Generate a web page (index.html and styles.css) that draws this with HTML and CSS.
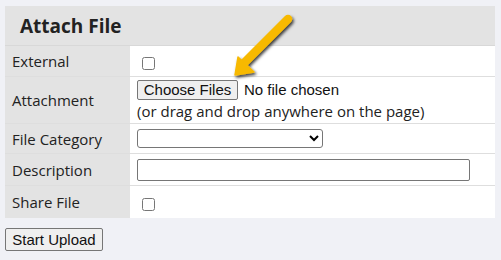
FILE: index.html
```html
<!DOCTYPE html>
<html>
<head>
<meta charset="utf-8">
<link rel="stylesheet" href="styles.css">
</head>
<body>
<div class="wrap">
  <table class="attach">
    <tr class="head"><th colspan="2">Attach File</th></tr>
    <tr class="r-ext"><td class="lbl">External</td><td class="val"><input type="checkbox" class="cb"></td></tr>
    <tr class="r-att"><td class="lbl">Attachment</td><td class="val">
      <div class="filerow"><span class="fbtn">Choose Files</span><span class="fname">No file chosen</span></div>
      <div class="hint">(or drag and drop anywhere on the page)</div>
    </td></tr>
    <tr class="r-cat"><td class="lbl">File Category</td><td class="val"><select class="sel"><option></option></select></td></tr>
    <tr class="r-desc"><td class="lbl">Description</td><td class="val"><input type="text" class="txt"></td></tr>
    <tr class="r-share"><td class="lbl">Share File</td><td class="val"><input type="checkbox" class="cb"></td></tr>
  </table>
  <button class="upload">Start Upload</button>
  <svg class="arrow" width="80" height="75" viewBox="0 0 80 75">
    <defs>
      <filter id="sh" x="-30%" y="-30%" width="160%" height="160%">
        <feDropShadow dx="1.5" dy="2" stdDeviation="1.6" flood-color="#000" flood-opacity="0.75"/>
      </filter>
    </defs>
    <g filter="url(#sh)" fill="#f7b900" stroke="#f7b900">
      <line x1="63" y1="9" x2="20" y2="52" stroke-width="8.5" stroke-linecap="round"/>
      <polygon points="10,65 13,47 29,62" stroke-width="1.5" stroke-linejoin="round"/>
    </g>
  </svg>
</div>
</body>
</html>
```
FILE: styles.css
```css
html, body {
  margin: 0;
  padding: 0;
  background: #f0f1f6;
}
body {
  font-family: "Open Sans", "Noto Sans", sans-serif;
  color: #222;
}
.wrap {
  position: relative;
  padding: 6px 5px;
}
.attach {
  width: 490px;
  border-collapse: collapse;
  background: #fff;
}
.head th {
  background: #e3e3e3;
  text-align: left;
  font-size: 19px;
  font-weight: 700;
  height: 39px;
  padding: 0 0 0 15px;
  border-bottom: 1px solid #d8d8d8;
}
.attach td {
  padding: 0;
  vertical-align: middle;
  border-bottom: 1px solid #dedede;
}
.attach tr:last-child td {
  border-bottom: none;
}
.lbl {
  width: 118px;
  background: #e3e3e3;
  padding-left: 7px !important;
  font-size: 15px;
}
.val {
  padding-left: 7px !important;
}
.r-ext td { height: 30px; }
.r-att td { height: 46px; }
.r-cat td { height: 29px; }
.r-desc td { height: 31px; }
.r-share td { height: 32px; }
.cb {
  width: 13px;
  height: 13px;
  margin: 2px 0 0 5px;
  vertical-align: middle;
}
.filerow {
  display: flex;
  align-items: center;
  gap: 6px;
  font-family: "Liberation Sans", Arial, sans-serif;
  font-size: 15px;
  color: #111;
}
.fbtn {
  display: inline-block;
  box-sizing: border-box;
  width: 101px;
  height: 20px;
  line-height: 17px;
  text-align: center;
  background: #efefef;
  border: 1px solid #767676;
  border-radius: 2px;
}
.hint {
  font-size: 15px;
  line-height: 19px;
  margin-top: 2px;
}
.sel {
  box-sizing: border-box;
  width: 186px;
  height: 19px;
  margin: 0;
  border: 1px solid #767676;
  border-radius: 3px;
  background: #fff;
  display: block;
}
.txt {
  box-sizing: border-box;
  width: 333px;
  height: 22px;
  margin: 0;
  border: 1px solid #767676;
  border-radius: 2px;
  display: block;
}
.upload {
  display: block;
  box-sizing: border-box;
  margin-top: 10px;
  width: 98px;
  height: 23px;
  padding: 0;
  font-family: "Liberation Sans", Arial, sans-serif;
  font-size: 15px;
  color: #111;
  background: #efefef;
  border: 1px solid #767676;
  border-radius: 2px;
}
.arrow {
  position: absolute;
  left: 225px;
  top: 10px;
}
```
